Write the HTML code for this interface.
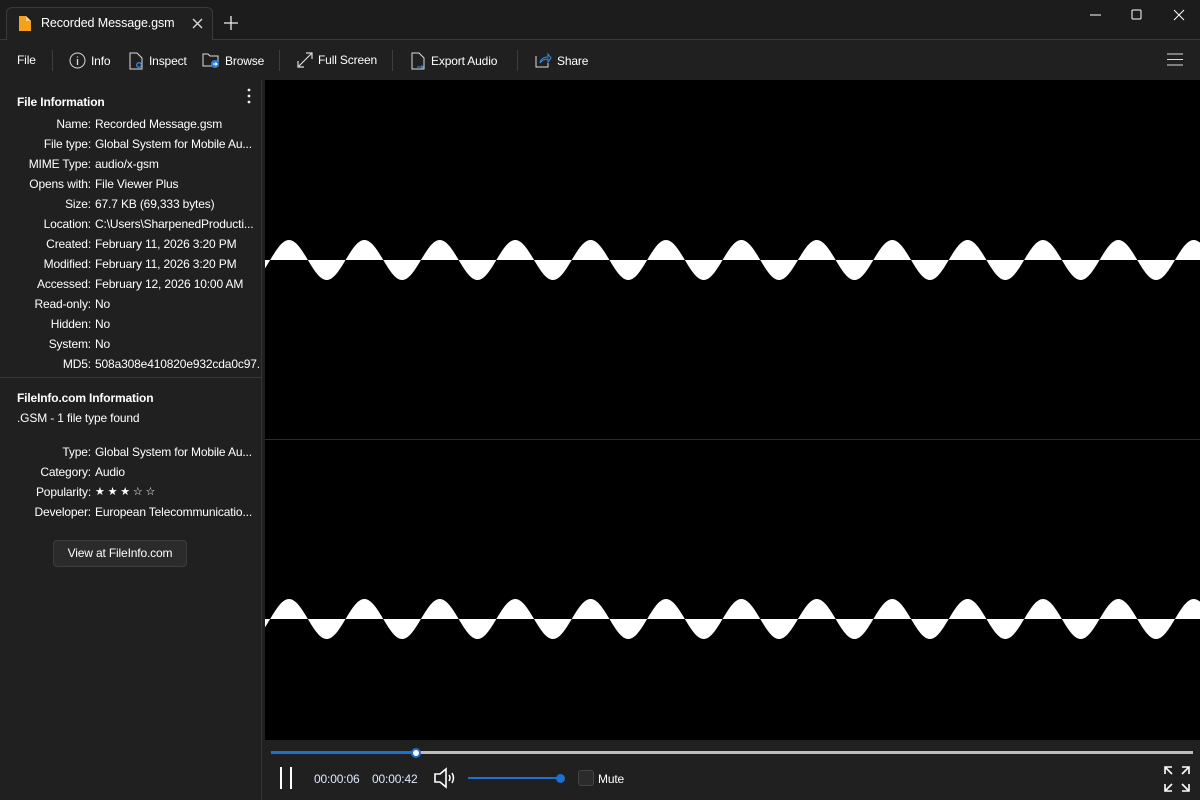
<!DOCTYPE html>
<html><head><meta charset="utf-8"><style>
*{box-sizing:border-box;margin:0;padding:0}
body{width:1200px;height:800px;background:#202020;font-family:"Liberation Sans",sans-serif;font-size:12px;color:#fff;position:relative;overflow:hidden;letter-spacing:-0.15px}
.abs{position:absolute}
#title{left:0;top:0;width:1200px;height:40px;background:#1c1c1c;border-bottom:1px solid #3a3a3a}
#tab{left:6px;top:7px;width:207px;height:34px;background:#202020;border:1px solid #3a3a3a;border-bottom:none;border-radius:6px 6px 0 0}
#toolbar{left:0;top:40px;width:1200px;height:40px;background:#202020}
.tb{position:absolute;top:52px;font-size:12px;color:#fff;display:flex;align-items:center;gap:5px}
.sep{position:absolute;top:50px;width:1px;height:21px;background:#3d3d3d}
#side{left:0;top:80px;width:262px;height:720px;background:#202020;border-right:1px solid #333}
.row{position:absolute;left:0;width:259px;height:20px;line-height:20px;white-space:nowrap;overflow:hidden}
.row .k{position:absolute;right:168px;text-align:right}
.row .v{position:absolute;left:95px}
h3{position:absolute;left:17px;font-size:12px;font-weight:bold}
#main{left:265px;top:80px;width:935px;height:660px;background:#000}
#player{left:265px;top:740px;width:935px;height:60px;background:#202020}
</style></head><body>
<div id="title" class="abs"></div>
<div id="tab" class="abs"></div>
<svg class="abs" style="left:19px;top:16px" width="12" height="15"><path d="M0 0H7L12 5V15H0Z" fill="#f7a01c"/><path d="M7 0V5H12" fill="#ffd08a"/></svg>
<div class="abs" style="left:41px;top:16px;font-size:12.5px;letter-spacing:-0.1px">Recorded Message.gsm</div>
<svg class="abs" style="left:192px;top:18px" width="11" height="11"><path d="M1 1L10 10M10 1L1 10" stroke="#ddd" stroke-width="1.3"/></svg>
<svg class="abs" style="left:224px;top:16px" width="14" height="14"><path d="M7 0V14M0 7H14" stroke="#eee" stroke-width="1.3"/></svg>
<svg class="abs" style="left:1090px;top:14px" width="12" height="3"><path d="M0 1H11" stroke="#fff"/></svg>
<svg class="abs" style="left:1131px;top:9px" width="12" height="12"><rect x="1" y="1" width="9" height="9" rx="1" fill="none" stroke="#fff"/></svg>
<svg class="abs" style="left:1173px;top:9px" width="12" height="12"><path d="M1 1L11 11M11 1L1 11" stroke="#fff"/></svg>
<div id="toolbar" class="abs"></div>
<div class="tb" style="left:17px;top:53px">File</div>
<div class="sep" style="left:52px"></div>
<div class="tb" style="left:69px"><svg width="17" height="17"><circle cx="8.5" cy="8.5" r="7.5" fill="none" stroke="#ddd"/><path d="M8.5 7V13M8.5 4.5V5.5" stroke="#ddd" stroke-width="1.3"/></svg>Info</div>
<div class="tb" style="left:129px"><svg width="15" height="18"><path d="M1 1H8L13 6V17H1Z" fill="none" stroke="#ddd"/><circle cx="10" cy="13" r="2.3" fill="none" stroke="#3b8be0" stroke-width="1.3"/></svg>Inspect</div>
<div class="tb" style="left:202px"><svg width="18" height="17"><path d="M1 2H6L8 4H16V14H1Z" fill="none" stroke="#ddd"/><circle cx="13" cy="12" r="4" fill="#2d7fd8"/><path d="M11 12H15M13.5 10.5L15 12L13.5 13.5" stroke="#fff" fill="none"/></svg>Browse</div>
<div class="sep" style="left:279px"></div>
<div class="tb" style="left:297px"><svg width="16" height="16"><path d="M1 15L15 1M9 1H15V7M1 9V15H7" fill="none" stroke="#ddd" stroke-width="1.2"/></svg>Full Screen</div>
<div class="sep" style="left:392px"></div>
<div class="tb" style="left:411px"><svg width="15" height="18"><path d="M1 1H8L13 6V17H1Z" fill="none" stroke="#ddd"/><path d="M6 15H12M10.5 13.5L12 15L10.5 16.5" stroke="#3b8be0" fill="none"/></svg>Export Audio</div>
<div class="sep" style="left:517px"></div>
<div class="tb" style="left:535px"><svg width="17" height="17"><path d="M1 4V15H13V11" fill="none" stroke="#ddd"/><path d="M5 11C6 6 10 5 13 5V2L16 6L13 10V7C10 7 7 8 5 11Z" fill="none" stroke="#3b8be0"/></svg>Share</div>
<svg class="abs" style="left:1167px;top:53px" width="17" height="13"><path d="M0 1H16M0 6.5H16M0 12H16" stroke="#ddd"/></svg>

<div id="side" class="abs"></div>
<h3 style="top:95px">File Information</h3>
<svg class="abs" style="left:247px;top:88px" width="4" height="16"><circle cx="2" cy="2" r="1.4" fill="#eee"/><circle cx="2" cy="8" r="1.4" fill="#eee"/><circle cx="2" cy="14" r="1.4" fill="#eee"/></svg>
<div class="row" style="top:114px"><span class="k">Name:</span><span class="v">Recorded Message.gsm</span></div>
<div class="row" style="top:134px"><span class="k">File type:</span><span class="v">Global System for Mobile Au...</span></div>
<div class="row" style="top:154px"><span class="k">MIME Type:</span><span class="v">audio/x-gsm</span></div>
<div class="row" style="top:174px"><span class="k">Opens with:</span><span class="v">File Viewer Plus</span></div>
<div class="row" style="top:194px"><span class="k">Size:</span><span class="v">67.7 KB (69,333 bytes)</span></div>
<div class="row" style="top:214px"><span class="k">Location:</span><span class="v">C:\Users\SharpenedProducti...</span></div>
<div class="row" style="top:234px"><span class="k">Created:</span><span class="v">February 11, 2026 3:20 PM</span></div>
<div class="row" style="top:254px"><span class="k">Modified:</span><span class="v">February 11, 2026 3:20 PM</span></div>
<div class="row" style="top:274px"><span class="k">Accessed:</span><span class="v">February 12, 2026 10:00 AM</span></div>
<div class="row" style="top:294px"><span class="k">Read-only:</span><span class="v">No</span></div>
<div class="row" style="top:314px"><span class="k">Hidden:</span><span class="v">No</span></div>
<div class="row" style="top:334px"><span class="k">System:</span><span class="v">No</span></div>
<div class="row" style="top:354px"><span class="k">MD5:</span><span class="v">508a308e410820e932cda0c97...</span></div>
<div class="abs" style="left:0;top:377px;width:262px;height:1px;background:#3a3a3a"></div>
<h3 style="top:391px">FileInfo.com Information</h3>
<div class="abs" style="left:17px;top:411px">.GSM - 1 file type found</div>
<div class="row" style="top:442px"><span class="k">Type:</span><span class="v">Global System for Mobile Au...</span></div>
<div class="row" style="top:462px"><span class="k">Category:</span><span class="v">Audio</span></div>
<div class="row" style="top:482px"><span class="k">Popularity:</span><span class="v" style="font-size:11px">★ ★ ★ ☆ ☆</span></div>
<div class="row" style="top:502px"><span class="k">Developer:</span><span class="v">European Telecommunicatio...</span></div>
<div class="abs" style="left:53px;top:540px;width:134px;height:27px;background:#2b2b2b;border:1px solid #3c3c3c;border-radius:4px;text-align:center;line-height:25px">View at FileInfo.com</div>

<div id="main" class="abs"></div>
<div class="abs" style="left:265px;top:439px;width:935px;height:1px;background:#2a2a2a"></div>
<svg id="wave" class="abs" style="left:265px;top:80px" width="935" height="660"></svg>

<div id="player" class="abs"></div>
<div class="abs" style="left:271px;top:751px;width:922px;height:3px;background:#bdbdbd"></div>
<div class="abs" style="left:271px;top:751px;width:145px;height:3px;background:#1f6fd1"></div>
<div class="abs" style="left:411px;top:748px;width:10px;height:10px;border-radius:50%;background:#fff;border:2px solid #1f6fd1"></div>
<div class="abs" style="left:280px;top:767px;width:2px;height:22px;background:#fff"></div>
<div class="abs" style="left:290px;top:767px;width:2px;height:22px;background:#fff"></div>
<div class="abs" style="left:314px;top:772px;color:#dfe8ff">00:00:06</div>
<div class="abs" style="left:372px;top:772px;color:#dfe8ff">00:00:42</div>
<svg class="abs" style="left:434px;top:767px" width="22" height="22"><path d="M1 7H6L12 2V20L6 15H1Z" fill="none" stroke="#fff" stroke-width="1.6"/><path d="M15 8Q17 11 15 14M18 6Q21 11 18 16" fill="none" stroke="#fff" stroke-width="1.5"/></svg>
<div class="abs" style="left:468px;top:777px;width:93px;height:2px;background:#1f6fd1"></div>
<div class="abs" style="left:556px;top:774px;width:9px;height:9px;border-radius:50%;background:#1f6fd1"></div>
<div class="abs" style="left:578px;top:770px;width:16px;height:16px;border-radius:3px;background:#2b2b2b;border:1px solid #444"></div>
<div class="abs" style="left:598px;top:772px">Mute</div>
<svg class="abs" style="left:1164px;top:766px" width="26" height="26"><path d="M1 8V1H8M1 1L8 8M18 1H25V8M25 1L18 8M1 18V25H8M1 25L8 18M18 25H25V18M25 25L18 18" fill="none" stroke="#fff" stroke-width="1.6"/></svg>
<script>
(function(){
var svg=document.getElementById('wave'),P=75.4,A=20,x0=289-265;
function path(cy){var d='M0 '+cy;for(var x=0;x<=935;x+=1){var y=cy-A*Math.cos(2*Math.PI*(x-x0)/P);d+=' L'+x+' '+y.toFixed(2);}d+=' L935 '+cy+' Z';return d;}
svg.innerHTML='<path d="'+path(180)+'" fill="#fff"/><path d="'+path(539)+'" fill="#fff"/>';
})();
</script>
</body></html>
